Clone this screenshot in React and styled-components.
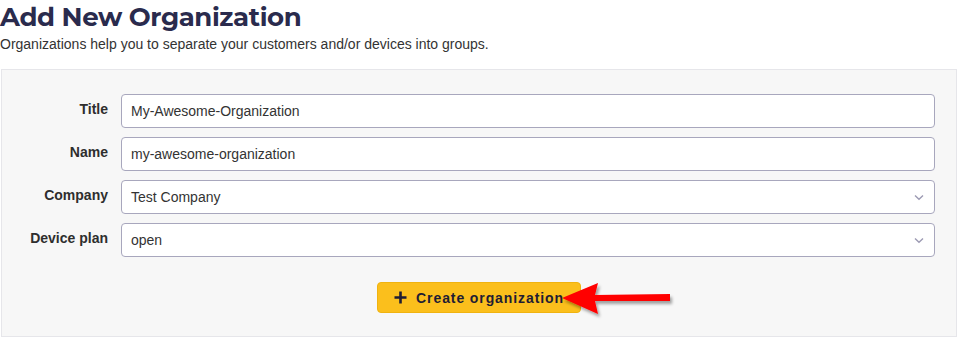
import React from "react";
import styled, { createGlobalStyle } from "styled-components";

const Global = createGlobalStyle`
  html, body { margin: 0; padding: 0; background: #ffffff; }
  body { font-family: "Liberation Sans", Arial, sans-serif; color: #333; }
  * { box-sizing: border-box; }
`;

const Page = styled.div`
  position: relative;
  width: 961px;
  height: 337px;
  overflow: hidden;
`;

const Heading = styled.h1`
  margin: 0;
  padding-top: 3px;
  font-family: "Montserrat", Inter, sans-serif;
  font-weight: 700;
  font-size: 26px;
  line-height: 29px;
  letter-spacing: -0.4px;
  color: #2a2b4d;
`;

const Subtitle = styled.p`
  margin: 4px 0 0 0;
  font-size: 14px;
  line-height: 16px;
  color: #333;
`;

const Panel = styled.div`
  margin: 17px 4px 0 1px;
  background: #f7f7f7;
  border: 1px solid #e6e6ea;
  padding: 24px 21px 23px 0;
  display: flex;
  flex-direction: column;
`;

const Fields = styled.div`
  display: grid;
  grid-template-columns: 106px 1fr;
  column-gap: 13px;
  row-gap: 9px;
`;

const Label = styled.label`
  text-align: right;
  font-weight: 700;
  font-size: 14px;
  line-height: 16px;
  padding-top: 7px;
  color: #2e2e2e;
`;

const Control = styled.div`
  position: relative;
  height: 34px;
  background: #fff;
  border: 1px solid #a8a7bd;
  border-radius: 4px;
  display: flex;
  align-items: center;
  padding: 0 9px;
  font-size: 14px;
  color: #333;
`;

const Chevron = styled.svg`
  position: absolute;
  right: 10px;
  top: 13px;
`;

const ButtonRow = styled.div`
  display: flex;
  justify-content: center;
  margin-top: 25px;
  padding-left: 21px;
`;

const Button = styled.button`
  display: flex;
  align-items: center;
  gap: 9px;
  height: 31px;
  padding: 0 16px 0 16px;
  background: #fbbf1c;
  border: 1px solid #f0b310;
  border-radius: 4px;
  font-family: "Liberation Sans", Arial, sans-serif;
  font-weight: 700;
  font-size: 14px;
  color: #1f1d33;
  letter-spacing: 0.9px;
`;

const Arrow = styled.svg`
  position: absolute;
  left: 556px;
  top: 279px;
`;

const ChevronIcon = () => (
  <Chevron width="10" height="7" viewBox="0 0 10 7">
    <path d="M1 1.5 L5 5.2 L9 1.5" fill="none" stroke="#9c9ab3" strokeWidth="1.4" />
  </Chevron>
);

const fields = [
  { label: "Title", value: "My-Awesome-Organization" },
  { label: "Name", value: "my-awesome-organization" },
  { label: "Company", value: "Test Company", select: true },
  { label: "Device plan", value: "open", select: true },
];

export default function App() {
  return (
    <Page>
      <Global />
      <Heading>Add New Organization</Heading>
      <Subtitle>Organizations help you to separate your customers and/or devices into groups.</Subtitle>
      <Panel>
        <Fields>
          {fields.map((f) => (
            <React.Fragment key={f.label}>
              <Label>{f.label}</Label>
              <Control>
                {f.value}
                {f.select && <ChevronIcon />}
              </Control>
            </React.Fragment>
          ))}
        </Fields>
        <ButtonRow>
          <Button>
            <svg width="13" height="13" viewBox="0 0 13 13">
              <path d="M6.5 0.5 V12.5 M0.5 6.5 H12.5" stroke="#1f1d33" strokeWidth="2.6" />
            </svg>
            Create organization
          </Button>
        </ButtonRow>
      </Panel>
      <Arrow width="124" height="46" viewBox="0 0 124 46">
        <defs>
          <filter id="sh" x="-20%" y="-30%" width="140%" height="170%">
            <feDropShadow dx="2" dy="3" stdDeviation="1.6" floodColor="#000" floodOpacity="0.35" />
          </filter>
        </defs>
        <g filter="url(#sh)">
          <polygon points="6,19 42,4 39,16 114,15 114,22 39,22 42,35" fill="#ff0000" />
        </g>
      </Arrow>
    </Page>
  );
}
